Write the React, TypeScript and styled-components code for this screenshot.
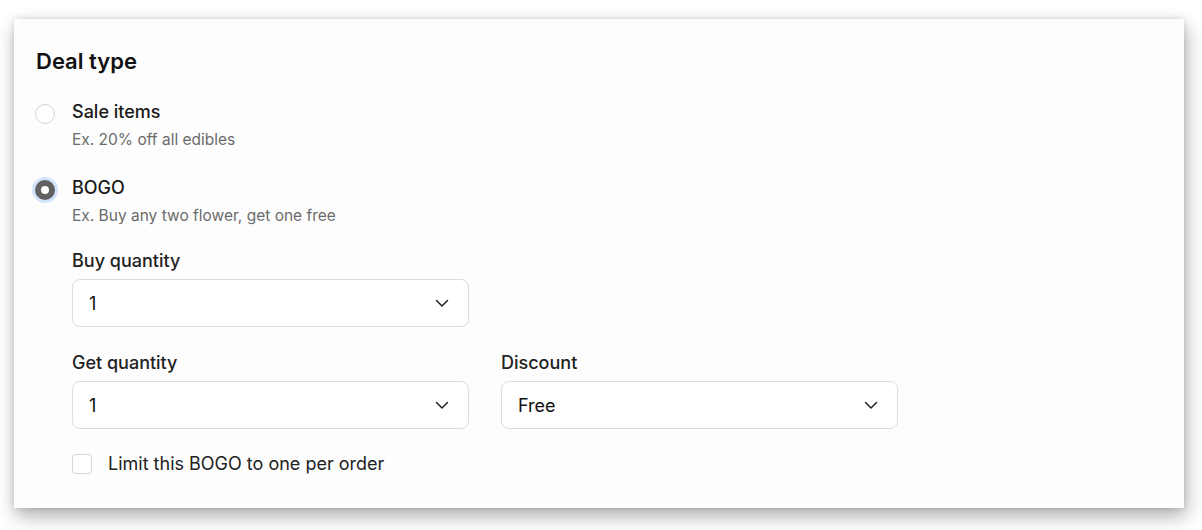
import React, { useState } from 'react';
import styled, { createGlobalStyle } from 'styled-components';

const GlobalStyle = createGlobalStyle`
  body { margin: 0; background: #ffffff; font-family: Inter, "Noto Sans", "Liberation Sans", sans-serif; -webkit-font-smoothing: antialiased; }
`;

const Page = styled.div`padding: 19px 18px 22px 14px;`;

const Card = styled.section`
  background: #fdfdfd;
  height: 489px;
  box-sizing: border-box;
  padding: 29px 22px 0 22px;
  box-shadow: 2px 8px 18px rgba(0, 0, 0, 0.32), 0 0 6px rgba(0, 0, 0, 0.12);
`;

const Heading = styled.h2`
  margin: 0 0 27px 0;
  font-size: 22px;
  line-height: 26px;
  font-weight: 600;
  color: #111;
`;

const Option = styled.label<{ $last?: boolean }>`
  display: flex;
  align-items: flex-start;
  gap: 17px;
  margin-bottom: ${(p) => (p.$last ? '24px' : '27px')};
  cursor: pointer;
`;

const RadioDot = styled.span<{ $checked: boolean }>`
  flex: none;
  width: 20px;
  height: 20px;
  box-sizing: border-box;
  border-radius: 50%;
  margin-top: 3px;
  margin-left: -1px;
  border: ${(p) => (p.$checked ? '6.5px solid #616161' : '1px solid #d4d4d8')};
  background: #fff;
  box-shadow: ${(p) => (p.$checked ? '0 0 0 3px #d3e3fb' : 'none')};
`;

const OptionText = styled.div`display: flex; flex-direction: column;`;

const OptionTitle = styled.span`
  font-size: 18px;
  line-height: 22px;
  font-weight: 500;
  color: #1a1a1a;
`;

const OptionHint = styled.span`
  margin-top: 7px;
  font-size: 15.5px;
  line-height: 20px;
  color: #6b6b6b;
`;

const Nested = styled.div`
  padding-left: 36px;
  display: flex;
  flex-direction: column;
  gap: 25px;
`;

const Row = styled.div`
  display: grid;
  grid-template-columns: 397px 397px;
  column-gap: 32px;
`;

const Field = styled.div`display: flex; flex-direction: column; gap: 7px;`;

const FieldLabel = styled.span`
  font-size: 18px;
  line-height: 22px;
  font-weight: 500;
  color: #222;
`;

const SelectBox = styled.div`
  height: 48px;
  box-sizing: border-box;
  border: 1px solid #dcdcdc;
  border-radius: 8px;
  background: #fff;
  display: flex;
  align-items: center;
  justify-content: space-between;
  padding: 0 19px 0 16px;
  font-size: 18px;
  color: #111;
`;

const CheckRow = styled.label`
  display: flex;
  align-items: center;
  gap: 16px;
  margin-top: -1px;
  font-size: 18px;
  color: #222;
  cursor: pointer;
`;

const CheckBox = styled.span`
  flex: none;
  width: 20px;
  height: 20px;
  box-sizing: border-box;
  border: 1px solid #d4d4d8;
  border-radius: 4px;
  background: #fff;
`;

const Chevron = () => (
  <svg width="14" height="14" viewBox="0 0 14 14" fill="none">
    <path d="M1.5 4.5l5.5 5.5 5.5-5.5" stroke="#222" strokeWidth="1.5" strokeLinecap="round" strokeLinejoin="round" />
  </svg>
);

const Select = ({ value }: { value: string }) => (
  <SelectBox>
    <span>{value}</span>
    <Chevron />
  </SelectBox>
);

const options = [
  { id: 'sale', title: 'Sale items', hint: 'Ex. 20% off all edibles' },
  { id: 'bogo', title: 'BOGO', hint: 'Ex. Buy any two flower, get one free' },
];

export default function App() {
  const [type, setType] = useState('bogo');

  return (
    <>
      <GlobalStyle />
      <Page>
        <Card>
          <Heading>Deal type</Heading>
          {options.map((o, i) => (
            <Option key={o.id} $last={i === options.length - 1} onClick={() => setType(o.id)}>
              <RadioDot $checked={type === o.id} />
              <OptionText>
                <OptionTitle>{o.title}</OptionTitle>
                <OptionHint>{o.hint}</OptionHint>
              </OptionText>
            </Option>
          ))}
          <Nested>
            <Row>
              <Field>
                <FieldLabel>Buy quantity</FieldLabel>
                <Select value="1" />
              </Field>
            </Row>
            <Row>
              <Field>
                <FieldLabel>Get quantity</FieldLabel>
                <Select value="1" />
              </Field>
              <Field>
                <FieldLabel>Discount</FieldLabel>
                <Select value="Free" />
              </Field>
            </Row>
            <CheckRow>
              <CheckBox />
              Limit this BOGO to one per order
            </CheckRow>
          </Nested>
        </Card>
      </Page>
    </>
  );
}
